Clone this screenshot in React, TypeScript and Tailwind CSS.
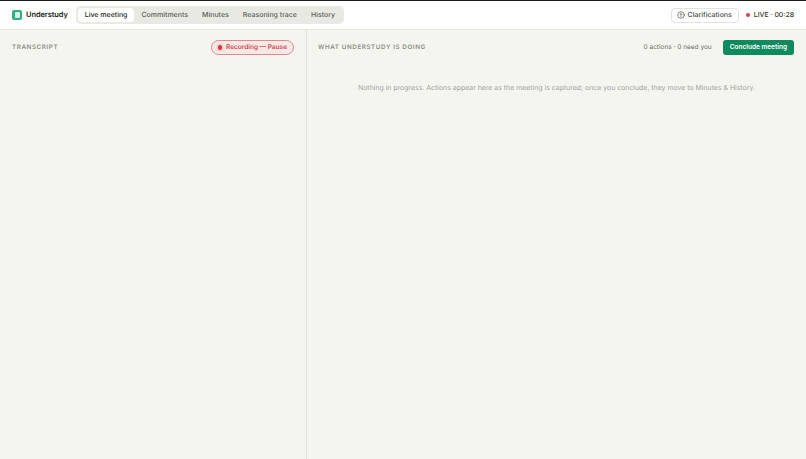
import React from 'react';

const tabs = ['Live meeting', 'Commitments', 'Minutes', 'Reasoning trace', 'History'];

export default function App() {
  return (
    <div className="h-[459px] w-[806px] overflow-hidden bg-[#f5f5f0] flex flex-col font-['Inter',sans-serif] text-[#1c1d1a] antialiased [text-rendering:geometricPrecision]">
      <div className="h-[1px] bg-[#1c1c1c] shrink-0" />
      <header className="h-[29px] shrink-0 bg-white border-b border-[#e8e8e2] flex items-center pl-3 pr-3">
        <div className="w-[10px] h-[10px] rounded-[2px] bg-[#2fb083] flex items-center justify-center">
          <div className="w-[5px] h-[6px] rounded-[1px] bg-[#dcefe6]" />
        </div>
        <span className="ml-1 text-[7.5px] font-semibold tracking-[-0.1px]">Understudy</span>
        <nav className="ml-[8px] h-[18px] flex items-center rounded-[5px] bg-[#e9e9e3] p-[2px]">
          {tabs.map((t, i) => (
            <div
              key={t}
              className={
                i === 0
                  ? 'h-[14px] px-[7px] flex items-center rounded-[4px] bg-white text-[7px] font-medium text-[#1c1d1a]'
                  : 'h-[14px] px-[7px] flex items-center text-[7px] font-medium text-[#5c5e58]'
              }
            >
              {t}
            </div>
          ))}
        </nav>
        <div className="ml-auto h-[15px] pl-[5px] pr-[6px] flex items-center gap-[3px] rounded-[4px] bg-white border border-[#e3e3dd] text-[7px] font-medium text-[#4b4d47]">
          <svg width="8" height="8" viewBox="0 0 24 24" fill="none" stroke="currentColor" strokeWidth="2" strokeLinecap="round" strokeLinejoin="round">
            <circle cx="12" cy="12" r="10" />
            <path d="M12 17V9" />
            <path d="M8.5 10.5 12 7l3.5 3.5" />
          </svg>
          Clarifications
        </div>
        <div className="ml-[7px] flex items-center gap-[4px] text-[6.9px] font-medium text-[#34352f]">
          <span className="w-[4px] h-[4px] rounded-full bg-[#d9404a]" />
          LIVE · 00:28
        </div>
      </header>
      <main className="flex-1 flex min-h-0">
        <section className="w-[307px] shrink-0 border-r border-[#e2e2dc]">
          <div className="h-[35px] pl-3 pr-3 flex items-center justify-between">
            <span className="text-[6.25px] font-semibold tracking-[0.6px] text-[#8b8c86]">TRANSCRIPT</span>
            <div className="h-[15px] px-[6px] flex items-center gap-[3.5px] rounded-full border border-[#dc8a8e] bg-[#f7e8e5] text-[6.5px] font-semibold text-[#cf4a50]">
              <span className="w-[4.5px] h-[4.5px] rounded-full bg-[#d5383f] shadow-[0_0_0_1.5px_#eecfcd]" />
              Recording — Pause
            </div>
          </div>
        </section>
        <section className="flex-1 min-w-0">
          <div className="h-[35px] pl-[11px] pr-3 flex items-center">
            <span className="text-[6.25px] font-semibold tracking-[0.6px] text-[#8b8c86]">WHAT UNDERSTUDY IS DOING</span>
            <span className="ml-auto text-[6.5px] text-[#6b6c66]">0 actions · 0 need you</span>
            <button className="ml-[11px] h-[15px] px-[7px] rounded-[3px] bg-[#0f8a5f] text-white text-[6.5px] font-semibold">Conclude meeting</button>
          </div>
          <p className="mt-[18px] text-center text-[6.93px] text-[#a3a49e]">
            Nothing in progress. Actions appear here as the meeting is captured; once you conclude, they move to Minutes &amp; History.
          </p>
        </section>
      </main>
    </div>
  );
}
